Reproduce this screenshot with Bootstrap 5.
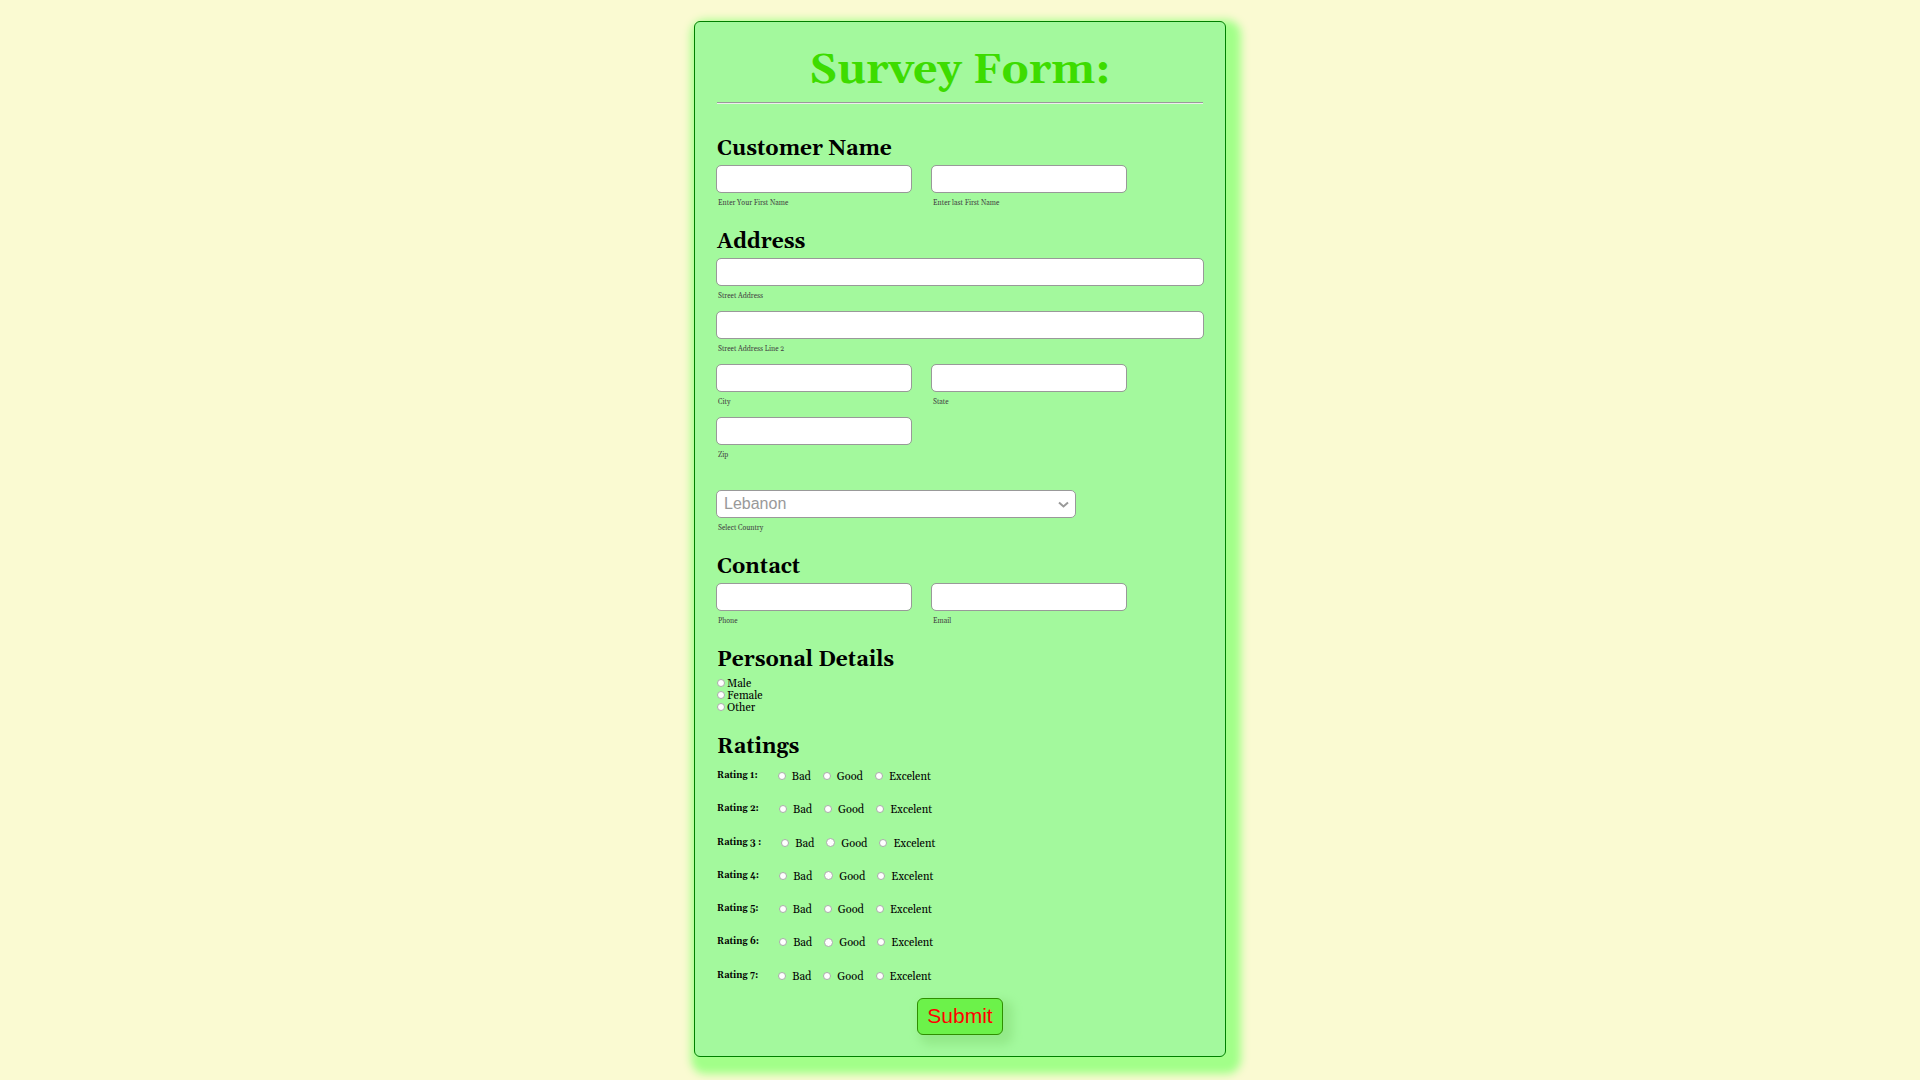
<!DOCTYPE html>
<html lang="en">
<head>
<meta charset="utf-8">
<meta name="viewport" content="width=device-width, initial-scale=1">
<title>Survey Form</title>
<link href="https://cdn.jsdelivr.net/npm/bootstrap@5.3.0/dist/css/bootstrap.min.css" rel="stylesheet">
<style>
  body { background: #fafad2; color: #000; font-family: Georgia, Gelasio, "Liberation Serif", serif; }
  main { padding: 21px 0 23px; }
  .survey { max-width: 532px; padding: 23px 21px 21px; background: #a3f99d; border: 1px solid green; border-radius: 6px; box-shadow: 6px 8px 8px 9px #a2ff89; }
  .survey-title { margin: 0; font-size: 43px; line-height: 52px; font-weight: 700; color: #3ddc00; }
  .survey-rule { margin: 5px 1px 30px; height: 2px; border: 0; border-top: 1px solid #9a9a9a; border-bottom: 1px solid #eee; opacity: 1; }
  .survey section + section { margin-top: 18px; }
  .section-title { margin: 0 0 1px; padding-left: 1px; font-size: 21px; line-height: 30px; font-weight: 700; }
  .fields { display: grid; gap: 9px 19px; grid-template-columns: repeat(2, minmax(0, 196px)); }
  .fields .wide { grid-column: 1 / -1; margin-right: -77px; }
  .survey .form-control, .survey .form-select { height: 28px; min-height: 28px; padding: 0 7px; border: 1px solid #999; border-radius: 5px; background-color: #fff; color: #999; font-family: "Liberation Sans", Arial, sans-serif; font-size: 16px; line-height: 24px; }
  .survey .form-select { background-image: none; }
  .country-field { max-width: 360px; margin-top: 29px; }
  .country-field svg { position: absolute; right: 7px; top: 11px; pointer-events: none; }
  .caption-text { display: block; margin: 2px 0 -2px; padding-left: 2px; font-size: 7px; line-height: 16px; color: #444; }
  .pick { font-size: 11px; line-height: 12px; }
  .survey .dot { flex: none; float: none; margin: 0 0 2px; width: 8px; height: 8px; border: 1px solid #aaa; background-color: #fff; }
  .survey .dot-wide { width: 9px; height: 9px; }
  .genders { padding: 2px 0 0 1px; }
  .genders .pick { gap: 2px; }
  .ratings { display: grid; grid-auto-rows: 1fr; height: 233px; }
  .rating-row { padding: 8px 0 0 1px; }
  .rating-name { margin-right: 20px; font-size: 9px; line-height: 10px; font-weight: 700; }
  .rating-row .pick { gap: 6px; margin-right: 12px; }
  .send { margin-top: 2px; padding: 0 9px 2px; height: 37px; border: 1px solid #2f8f00; border-radius: 6px; background: #6cf24a; color: red; font-family: "Liberation Sans", Arial, sans-serif; font-size: 21px; line-height: 32px; box-shadow: 6px 6px 10px 4px #94ea8a; }
</style>
<script src="https://cdn.jsdelivr.net/npm/bootstrap@5.3.0/dist/js/bootstrap.bundle.min.js"></script>
</head>
<body>
<main>
<form class="survey mx-auto">
  <h1 class="survey-title text-center">Survey Form:</h1>
  <hr class="survey-rule">

  <section>
    <h2 class="section-title">Customer Name</h2>
    <div class="fields">
      <div><input class="form-control" type="text" id="first"><label class="caption-text" for="first">Enter Your First Name</label></div>
      <div><input class="form-control" type="text" id="last"><label class="caption-text" for="last">Enter last First Name</label></div>
    </div>
  </section>

  <section>
    <h2 class="section-title">Address</h2>
    <div class="fields">
      <div class="wide"><input class="form-control" type="text" id="street1"><label class="caption-text" for="street1">Street Address</label></div>
      <div class="wide"><input class="form-control" type="text" id="street2"><label class="caption-text" for="street2">Street Address Line 2</label></div>
      <div><input class="form-control" type="text" id="city"><label class="caption-text" for="city">City</label></div>
      <div><input class="form-control" type="text" id="state"><label class="caption-text" for="state">State</label></div>
      <div><input class="form-control" type="text" id="zip"><label class="caption-text" for="zip">Zip</label></div>
    </div>
    <div class="country-field position-relative">
      <select class="form-select" id="country"><option>Lebanon</option></select>
      <svg width="11" height="8" viewBox="0 0 11 8" fill="none" stroke="#999" stroke-width="2" aria-hidden="true"><path d="M1 1.5 5.5 5.5 10 1.5"/></svg>
      <label class="caption-text" for="country">Select Country</label>
    </div>
  </section>

  <section>
    <h2 class="section-title">Contact</h2>
    <div class="fields">
      <div><input class="form-control" type="tel" id="phone"><label class="caption-text" for="phone">Phone</label></div>
      <div><input class="form-control" type="email" id="email"><label class="caption-text" for="email">Email</label></div>
    </div>
  </section>

  <section>
    <h2 class="section-title" id="personal">Personal Details</h2>
    <div class="genders d-flex flex-column align-items-start" role="radiogroup" aria-labelledby="personal">
      <label class="pick d-flex align-items-center"><input class="form-check-input dot" type="radio" name="gender">Male</label>
      <label class="pick d-flex align-items-center"><input class="form-check-input dot" type="radio" name="gender">Female</label>
      <label class="pick d-flex align-items-center"><input class="form-check-input dot" type="radio" name="gender">Other</label>
    </div>
  </section>

  <section>
    <h2 class="section-title">Ratings</h2>
    <div class="ratings">
      <div class="rating-row d-flex align-items-start" role="radiogroup" aria-labelledby="r1">
        <span class="rating-name" id="r1">Rating 1:</span>
        <label class="pick d-flex align-items-center"><input class="form-check-input dot" type="radio" name="rating1">Bad</label>
        <label class="pick d-flex align-items-center"><input class="form-check-input dot" type="radio" name="rating1">Good</label>
        <label class="pick d-flex align-items-center"><input class="form-check-input dot" type="radio" name="rating1">Excelent</label>
      </div>
      <div class="rating-row d-flex align-items-start" role="radiogroup" aria-labelledby="r2">
        <span class="rating-name" id="r2">Rating 2:</span>
        <label class="pick d-flex align-items-center"><input class="form-check-input dot" type="radio" name="rating2">Bad</label>
        <label class="pick d-flex align-items-center"><input class="form-check-input dot" type="radio" name="rating2">Good</label>
        <label class="pick d-flex align-items-center"><input class="form-check-input dot" type="radio" name="rating2">Excelent</label>
      </div>
      <div class="rating-row d-flex align-items-start" role="radiogroup" aria-labelledby="r3">
        <span class="rating-name" id="r3">Rating 3 :</span>
        <label class="pick d-flex align-items-center"><input class="form-check-input dot" type="radio" name="rating3">Bad</label>
        <label class="pick d-flex align-items-center"><input class="form-check-input dot dot-wide" type="radio" name="rating3">Good</label>
        <label class="pick d-flex align-items-center"><input class="form-check-input dot" type="radio" name="rating3">Excelent</label>
      </div>
      <div class="rating-row d-flex align-items-start" role="radiogroup" aria-labelledby="r4">
        <span class="rating-name" id="r4">Rating 4:</span>
        <label class="pick d-flex align-items-center"><input class="form-check-input dot" type="radio" name="rating4">Bad</label>
        <label class="pick d-flex align-items-center"><input class="form-check-input dot dot-wide" type="radio" name="rating4">Good</label>
        <label class="pick d-flex align-items-center"><input class="form-check-input dot" type="radio" name="rating4">Excelent</label>
      </div>
      <div class="rating-row d-flex align-items-start" role="radiogroup" aria-labelledby="r5">
        <span class="rating-name" id="r5">Rating 5:</span>
        <label class="pick d-flex align-items-center"><input class="form-check-input dot" type="radio" name="rating5">Bad</label>
        <label class="pick d-flex align-items-center"><input class="form-check-input dot" type="radio" name="rating5">Good</label>
        <label class="pick d-flex align-items-center"><input class="form-check-input dot" type="radio" name="rating5">Excelent</label>
      </div>
      <div class="rating-row d-flex align-items-start" role="radiogroup" aria-labelledby="r6">
        <span class="rating-name" id="r6">Rating 6:</span>
        <label class="pick d-flex align-items-center"><input class="form-check-input dot" type="radio" name="rating6">Bad</label>
        <label class="pick d-flex align-items-center"><input class="form-check-input dot dot-wide" type="radio" name="rating6">Good</label>
        <label class="pick d-flex align-items-center"><input class="form-check-input dot" type="radio" name="rating6">Excelent</label>
      </div>
      <div class="rating-row d-flex align-items-start" role="radiogroup" aria-labelledby="r7">
        <span class="rating-name" id="r7">Rating 7:</span>
        <label class="pick d-flex align-items-center"><input class="form-check-input dot" type="radio" name="rating7">Bad</label>
        <label class="pick d-flex align-items-center"><input class="form-check-input dot" type="radio" name="rating7">Good</label>
        <label class="pick d-flex align-items-center"><input class="form-check-input dot" type="radio" name="rating7">Excelent</label>
      </div>
    </div>
  </section>

  <button class="send d-block mx-auto" type="submit">Submit</button>
</form>
</main>
</body>
</html>
